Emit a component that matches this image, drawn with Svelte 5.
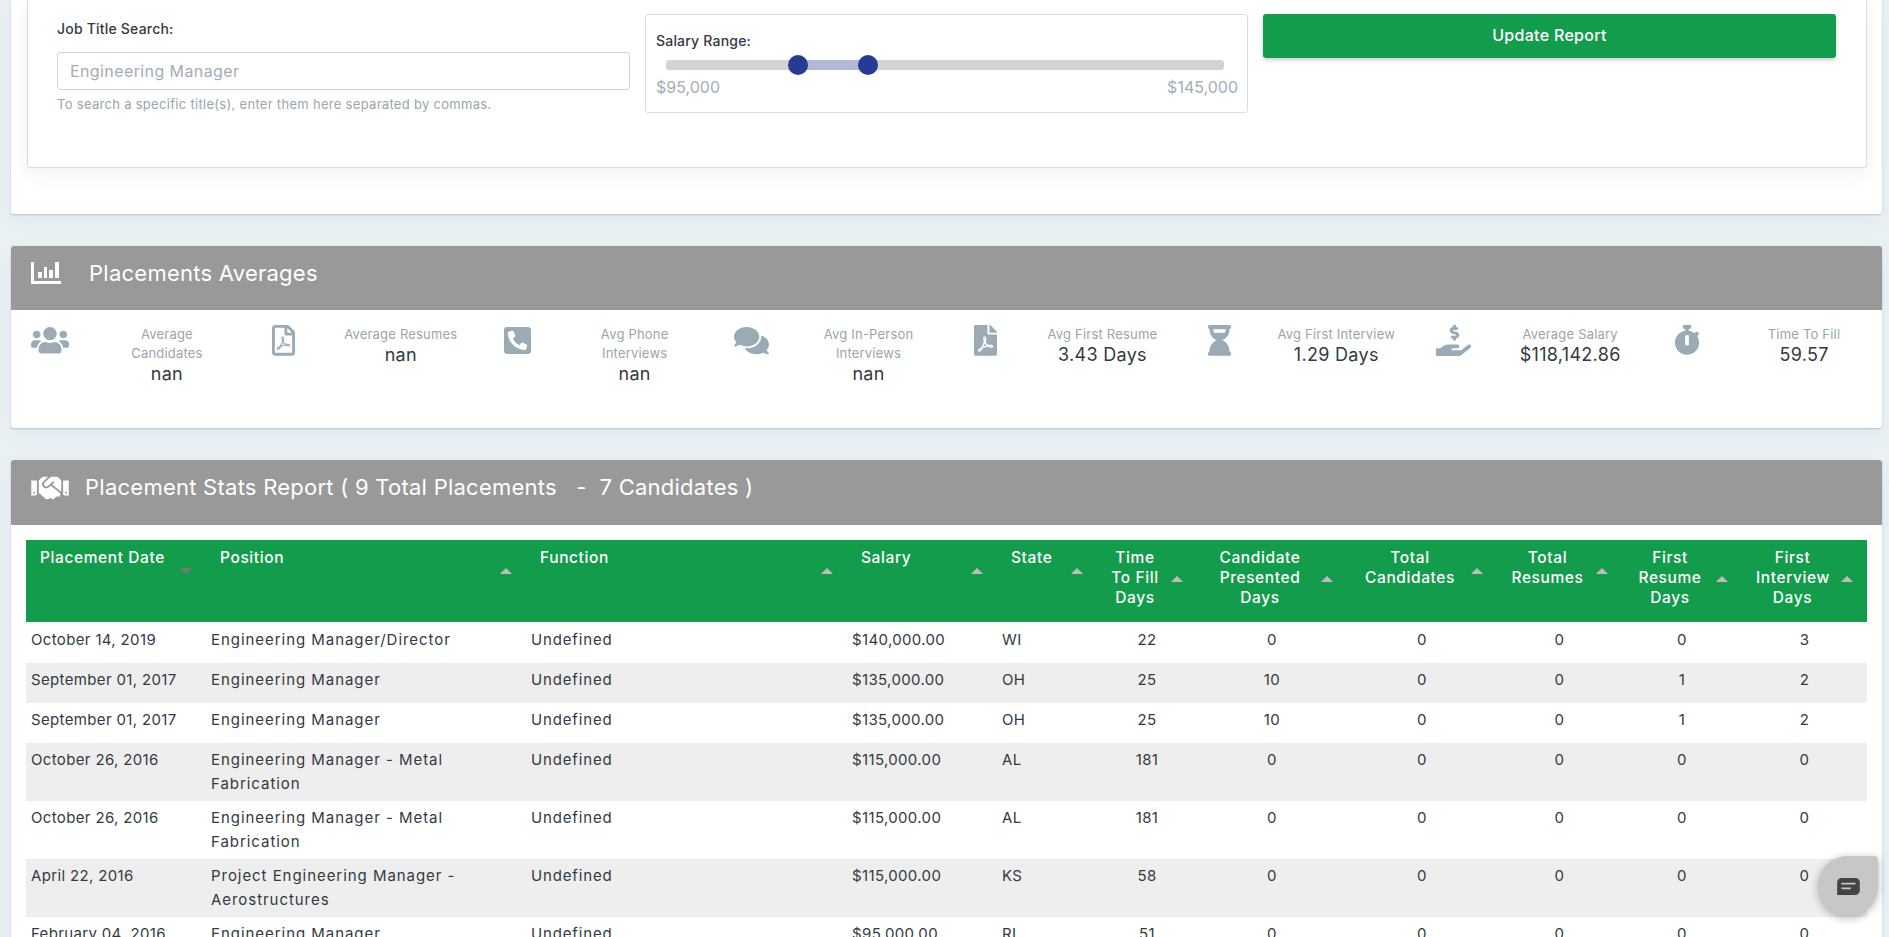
<script>
  const stats = [
    { icon: 'users', label: ['Average', 'Candidates'], value: 'nan' },
    { icon: 'pdfo', label: ['Average Resumes'], value: 'nan' },
    { icon: 'phone', label: ['Avg Phone', 'Interviews'], value: 'nan' },
    { icon: 'comments', label: ['Avg In-Person', 'Interviews'], value: 'nan' },
    { icon: 'pdf', label: ['Avg First Resume'], value: '3.43 Days' },
    { icon: 'hourglass', label: ['Avg First Interview'], value: '1.29 Days' },
    { icon: 'hand', label: ['Average Salary'], value: '$118,142.86' },
    { icon: 'watch', label: ['Time To Fill'], value: '59.57' }
  ];
  const icons = {
    users: { vb: '0 0 640 512', w: 38, d: 'M96 224c35.3 0 64-28.7 64-64s-28.7-64-64-64-64 28.7-64 64 28.7 64 64 64zm448 0c35.3 0 64-28.7 64-64s-28.7-64-64-64-64 28.7-64 64 28.7 64 64 64zm32 32h-64c-17.6 0-33.5 7.1-45.1 18.6 40.3 22.1 68.9 62 75.1 109.4h66c17.7 0 32-14.3 32-32v-32c0-35.3-28.7-64-64-64zm-256 0c61.9 0 112-50.1 112-112S381.9 32 320 32 208 82.1 208 144s50.1 112 112 112zm76.8 32h-8.3c-20.8 10-43.9 16-68.5 16s-47.6-6-68.5-16h-8.3C179.6 288 128 339.6 128 403.2V432c0 26.5 21.5 48 48 48h288c26.5 0 48-21.5 48-48v-28.8c0-63.6-51.6-115.2-115.2-115.2zm-223.7-13.4C161.5 263.1 145.6 256 128 256H64c-35.3 0-64 28.7-64 64v32c0 17.7 14.3 32 32 32h65.9c6.3-47.4 34.9-87.3 75.2-109.4z' },
    pdfo: { vb: '0 0 384 512', w: 23, d: 'M369.9 97.9L286 14C277 5 264.8-.1 252.1-.1H48C21.5 0 0 21.5 0 48v416c0 26.5 21.5 48 48 48h288c26.5 0 48-21.5 48-48V131.9c0-12.7-5.1-25-14.1-34zM332.1 128H256V51.9l76.1 76.1zM48 464V48h160v104c0 13.3 10.7 24 24 24h104v288H48zm250.2-143.7c-12.2-12-47-8.7-64.4-6.5-17.2-10.5-28.7-25-36.8-46.3 3.9-16.1 10.1-40.6 5.4-56-4.2-26.2-37.8-23.6-42.6-5.9-4.4 16.1-.4 38.5 7 67.1-10 23.9-24.9 56-35.4 74.4-20 10.3-47 26.2-51 46.2-3.3 15.8 26 55.2 76.1-31.2 22.4-7.4 46.8-16.5 68.4-20.1 18.9 10.2 41 17 55.8 17 25.5 0 28-28.2 17.5-38.7zm-198.1 77.8c5.1-13.7 24.5-29.5 30.4-35-19 30.3-30.4 35.7-30.4 35zm81.6-190.6c7.4 0 6.7 32.1 1.8 40.8-4.4-13.9-4.3-40.8-1.8-40.8zm-24.4 136.6c9.7-16.9 18-37 24.7-54.7 8.3 15.1 18.9 27.2 30.1 35.5-20.8 4.3-38.9 13.1-54.8 19.2zm131.6-5s-5 6-37.3-7.8c35.1-2.6 40.9 5.4 37.3 7.8z' },
    phone: { vb: '0 0 448 512', w: 27, flip: true, d: 'M400 32H48C21.49 32 0 53.49 0 80v352c0 26.51 21.49 48 48 48h352c26.51 0 48-21.49 48-48V80c0-26.51-21.49-48-48-48zM94 416c-7.033 0-13.057-4.873-14.616-11.627l-14.998-65a15 15 0 0 1 8.707-17.16l69.998-29.999a15 15 0 0 1 17.518 4.289l30.997 37.885c48.944-22.963 88.297-62.858 110.781-110.78l-37.886-30.997a15.001 15.001 0 0 1-4.289-17.518l30-69.998a15.001 15.001 0 0 1 17.16-8.707l65 14.998A14.997 14.997 0 0 1 384 126c0 160.292-129.945 290-290 290z' },
    comments: { vb: '0 0 576 512', w: 35, d: 'M416 192c0-88.4-93.1-160-208-160S0 103.6 0 192c0 34.3 14.1 65.9 38 92-13.4 30.2-35.5 54.2-35.8 54.5-2.2 2.3-2.8 5.7-1.5 8.7S4.8 352 8 352c36.6 0 66.9-12.3 88.7-25 32.2 15.7 70.3 25 111.3 25 114.9 0 208-71.6 208-160zm122 220c23.9-26 38-57.7 38-92 0-66.9-53.5-124.2-129.3-148.1.9 6.6 1.3 13.3 1.3 20.1 0 105.9-107.7 192-240 192-10.8 0-21.3-.8-31.7-1.9C207.8 439.6 281.8 480 368 480c41 0 79.1-9.2 111.3-25 21.8 12.7 52.1 25 88.7 25 3.2 0 6.1-1.9 7.3-4.8 1.3-2.9.7-6.3-1.5-8.7-.3-.3-22.4-24.2-35.8-54.5z' },
    pdf: { vb: '0 0 384 512', w: 23, d: 'M181.9 256.1c-5-16-4.9-46.9-2-46.9 8.4 0 7.6 36.9 2 46.9zm-1.7 47.2c-7.7 20.2-17.3 43.3-28.4 62.7 18.3-7 39-17.2 62.9-21.9-12.7-9.6-24.9-23.4-34.5-40.8zM86.1 428.1c0 .8 13.2-5.4 34.9-40.2-6.7 6.3-29.1 24.5-34.9 40.2zM248 160h136v328c0 13.3-10.7 24-24 24H24c-13.3 0-24-10.7-24-24V24C0 10.7 10.7 0 24 0h200v136c0 13.2 10.8 24 24 24zm-8 171.8c-20-12.2-33.3-29-42.7-53.8 4.5-18.5 11.6-46.6 6.2-64.2-4.7-29.4-42.4-26.5-47.8-6.8-5 18.3-.4 44.1 8.1 77-11.6 27.6-28.7 64.6-40.8 85.8-.1 0-.1.1-.2.1-27.1 13.9-73.6 44.5-54.5 68 5.6 6.9 16 10 21.5 10 17.9 0 35.7-18 61.1-61.8 25.8-8.5 54.1-19.1 79-23.2 21.7 11.8 47.1 19.5 64 19.5 29.2 0 31.2-32 19.7-43.4-13.9-13.6-54.3-9.7-73.6-7.2zM377 105L279 7c-4.5-4.5-10.6-7-17-7h-6v128h128v-6.1c0-6.3-2.5-12.4-7-16.9zm-74.1 255.3c4.1-2.7-2.5-11.9-42.8-9 37.1 15.8 42.8 9 42.8 9z' },
    hourglass: { vb: '0 0 384 512', w: 23, d: 'M24 0h336c13 0 24 11 24 24v16c0 13-11 24-24 24 0 91-51 168-121 192 70 24 121 101 121 192 13 0 24 11 24 24v16c0 13-11 24-24 24H24c-13 0-24-11-24-24v-16c0-13 11-24 24-24 0-91 51-168 121-192C75 232 24 155 24 64 11 64 0 53 0 40V24C0 11 11 0 24 0zm64 72c2 18 6 37 12 56h184c6-19 10-38 12-56H88z' },
    hand: { vb: '0 0 576 512', w: 35, d: 'M271.06,144.3l54.27,14.3a8.59,8.59,0,0,1,6.63,8.1c0,4.6-4.09,8.4-9.12,8.4h-35.6a30,30,0,0,1-11.19-2.2c-5.24-2.2-11.28-1.7-15.3,2l-19,17.5a11.68,11.68,0,0,0-2.25,2.66,11.42,11.42,0,0,0,3.88,15.74,83.77,83.77,0,0,0,34.51,11.5V240c0,8.8,7.83,16,17.37,16h17.37c9.55,0,17.38-7.2,17.38-16V222.4c32.93-3.6,57.84-31,53.5-63-3.15-23-22.46-41.3-46.56-47.7L282.68,97.4a8.59,8.59,0,0,1-6.63-8.1c0-4.6,4.09-8.4,9.12-8.4h35.6A30,30,0,0,1,332,83.1c5.23,2.2,11.28,1.7,15.3-2l19-17.5A11.31,11.31,0,0,0,368.47,61a11.43,11.43,0,0,0-3.84-15.78,83.82,83.82,0,0,0-34.52-11.5V16c0-8.8-7.82-16-17.37-16H295.37C285.82,0,278,7.2,278,16V33.6c-32.89,3.6-57.85,31-53.51,63C227.63,119.6,247,137.9,271.06,144.3ZM565.27,328.1c-11.8-10.7-30.2-10-42.6,0L430.27,402a63.64,63.64,0,0,1-40,14H272a16,16,0,0,1,0-32h78.29c15.9,0,30.71-10.9,33.25-26.6a31.2,31.2,0,0,0,.46-5.46A32,32,0,0,0,352,320H192a117.66,117.66,0,0,0-74.1,26.29L71.4,384H16A16,16,0,0,0,0,400v96a16,16,0,0,0,16,16H372.77a64,64,0,0,0,40-14L564,377a32,32,0,0,0,1.28-48.9Z' },
    watch: { vb: '0 0 448 512', w: 26, d: 'M432 304c0 114.9-93.1 208-208 208S16 418.9 16 304c0-104 76.3-190.2 176-205.5V64h-28c-6.6 0-12-5.4-12-12V12c0-6.6 5.4-12 12-12h120c6.6 0 12 5.4 12 12v40c0 6.6-5.4 12-12 12h-28v34.5c37.5 5.8 71.7 21.6 99.7 44.6l27.5-27.5c4.7-4.7 12.3-4.7 17 0l28.3 28.3c4.7 4.7 4.7 12.3 0 17l-29.4 29.4-.6.6C419.7 223.3 432 262.2 432 304zm-176 36V188.5c0-6.6-5.4-12-12-12h-40c-6.6 0-12 5.4-12 12V340c0 6.6 5.4 12 12 12h40c6.6 0 12-5.4 12-12z' }
  };
  const handshake = 'M434.7 64h-85.9c-8 0-15.7 3-21.6 8.4l-98.3 90c-.1.1-.2.3-.3.4-16.6 15.6-16.3 40.5-2.1 56 12.7 13.9 39.4 17.6 56.1 2.7.1-.1.3-.1.4-.2l79.9-73.2c6.5-5.9 16.7-5.5 22.6 1 6 6.5 5.5 16.6-1 22.6l-26.1 23.9L504 313.8c2.9 2.4 5.5 5 7.9 7.7V128l-54.6-54.6c-5.9-6-14.1-9.4-22.6-9.4zM544 128.2v223.9c0 17.7 14.3 32 32 32h64V128.2h-96zm48 223.9c-8.8 0-16-7.2-16-16s7.2-16 16-16 16 7.2 16 16-7.2 16-16 16zM0 384h64c17.7 0 32-14.3 32-32V128.2H0V384zm48-63.9c8.8 0 16 7.2 16 16s-7.2 16-16 16-16-7.2-16-16c0-8.9 7.2-16 16-16zm435.9 18.6L334.6 217.5l-30 27.5c-29.7 27.1-75.2 24.5-101.7-4.4-26.9-29.4-24.8-74.9 4.4-101.7L289.1 64h-83.8c-8.5 0-16.6 3.4-22.6 9.4L128 128v223.9h18.3l90.5 81.9c27.4 22.3 67.7 18.1 90-9.3l.2-.2 17.9 15.5c15.9 13 39.4 10.5 52.3-5.4l31.4-38.6 5.4 4.4c13.7 11.1 33.9 9.1 45-4.7l9.5-11.7c11.2-13.8 9.1-33.9-4.6-45.1z';

  const cols = [
    { w: 180, head: ['Placement Date'], left: true, dir: 'down' },
    { w: 320, head: ['Position'], left: true },
    { w: 321, head: ['Function'], left: true },
    { w: 150, head: ['Salary'], left: true },
    { w: 100, head: ['State'], left: true },
    { w: 100, head: ['Time', 'To Fill', 'Days'], low: true },
    { w: 150, head: ['Candidate', 'Presented', 'Days'], low: true },
    { w: 150, head: ['Total', 'Candidates'] },
    { w: 125, head: ['Total', 'Resumes'] },
    { w: 120, head: ['First', 'Resume', 'Days'], low: true },
    { w: 125, head: ['First', 'Interview', 'Days'], low: true }
  ];
  const rows = [
    ['October 14, 2019', 'Engineering Manager/Director', 'Undefined', '$140,000.00', 'WI', '22', '0', '0', '0', '0', '3'],
    ['September 01, 2017', 'Engineering Manager', 'Undefined', '$135,000.00', 'OH', '25', '10', '0', '0', '1', '2'],
    ['September 01, 2017', 'Engineering Manager', 'Undefined', '$135,000.00', 'OH', '25', '10', '0', '0', '1', '2'],
    ['October 26, 2016', 'Engineering Manager - Metal Fabrication', 'Undefined', '$115,000.00', 'AL', '181', '0', '0', '0', '0', '0'],
    ['October 26, 2016', 'Engineering Manager - Metal Fabrication', 'Undefined', '$115,000.00', 'AL', '181', '0', '0', '0', '0', '0'],
    ['April 22, 2016', 'Project Engineering Manager - Aerostructures', 'Undefined', '$115,000.00', 'KS', '58', '0', '0', '0', '0', '0'],
    ['February 04, 2016', 'Engineering Manager', 'Undefined', '$95,000.00', 'RI', '51', '0', '0', '0', '0', '0']
  ];
</script>

<div class="page">
  <section class="card filters">
    <div class="inner">
      <div class="search">
        <div class="field-label">Job Title Search:</div>
        <input class="input" placeholder="Engineering Manager" />
        <div class="help">To search a specific title(s), enter them here separated by commas.</div>
      </div>
      <div class="range">
        <div class="range-label">Salary Range:</div>
        <div class="track">
          <div class="fill"></div>
          <span class="knob a"></span>
          <span class="knob b"></span>
        </div>
        <div class="range-values"><span>$95,000</span><span>$145,000</span></div>
      </div>
      <button class="update">Update Report</button>
    </div>
  </section>

  <section class="card averages">
    <header class="head">
      <svg class="chart" viewBox="0 0 30 23" aria-hidden="true">
        <path d="M0 0h3v19h27v3H0z" />
        <path d="M7 10h4v6H7zM13 5h3v11h-3zM18 8h4v8h-4zM24 0h4v16h-4z" />
      </svg>
      <h2 class="title avg-title">Placements Averages</h2>
    </header>
    <div class="stats">
      {#each stats as s}
        <div class="stat">
          <div class="stat-icon">
            <svg viewBox={icons[s.icon].vb} style="width:{icons[s.icon].w}px" class:flip={icons[s.icon].flip} aria-hidden="true">
              <path d={icons[s.icon].d} />
            </svg>
          </div>
          <div class="stat-text">
            {#each s.label as line}<div class="stat-label">{line}</div>{/each}
            <div class="stat-value">{s.value}</div>
          </div>
        </div>
      {/each}
    </div>
  </section>

  <section class="card report">
    <header class="head">
      <svg class="shake" viewBox="0 0 640 512" aria-hidden="true"><path d={handshake} /></svg>
      <h2 class="title">Placement Stats Report ( 9 Total Placements &nbsp; - &nbsp;7 Candidates )</h2>
    </header>
    <div class="table-wrap">
      <table>
        <colgroup>
          {#each cols as c}<col style="width:{c.w}px" />{/each}
        </colgroup>
        <thead>
          <tr>
            {#each cols as c}
              <th class:left={c.left}>
                {#each c.head as line}<div>{line}</div>{/each}
                <span class="sort" class:down={c.dir === 'down'} class:low={c.low}></span>
              </th>
            {/each}
          </tr>
        </thead>
        <tbody>
          {#each rows as row}
            <tr>
              {#each row as cell, i}
                <td class:center={i >= 5} class:pos={i === 1} class:fn={i === 2}>{cell}</td>
              {/each}
            </tr>
          {/each}
        </tbody>
      </table>
    </div>
  </section>

  <div class="chat">
    <svg viewBox="0 0 24 18" aria-hidden="true">
      <path d="M5 0h14c2.8 0 5 2.2 5 5v8c0 2.8-2.2 5-5 5H0V5c0-2.800 2.200-5 5-5z" />
      <path class="line" d="M4.500 5h15v2h-15zM4.500 10h10v2h-10z" />
    </svg>
  </div>
</div>

<style>
  :global(body) {
    margin: 0;
    background: #e9f1f5;
    overflow: hidden;
  }
  .page {
    height: 100vh;
    overflow: hidden;
    padding: 0 7px 0 11px;
    box-sizing: border-box;
    font-family: Inter, "Open Sans", sans-serif;
    font-size: 14px;
    color: #343a40;
  }
  .card {
    background: #fff;
    border-radius: 3px;
    box-shadow: 0 1px 2px rgba(60, 80, 90, 0.25), 0 6px 20px rgba(60, 80, 90, 0.05);
    margin-bottom: 32px;
    overflow: hidden;
  }
  .filters {
    height: 214px;
    padding: 0 15px 0 16px;
    box-sizing: border-box;
    border-radius: 0 0 3px 3px;
  }
  .inner {
    display: flex;
    align-items: flex-start;
    height: 168px;
    box-sizing: border-box;
    padding: 14px 30px 0 29px;
    background: #fff;
    border: 1px solid #d8dde1;
    border-top: 0;
    border-radius: 0 0 3px 3px;
    box-shadow: 0 6px 20px rgba(0, 0, 0, 0.06);
    gap: 15px;
  }
  .search { width: 573px; flex: none; }
  .field-label {
    font-weight: 500;
    font-size: 14px;
    letter-spacing: 0.2px;
    line-height: 20px;
    margin: 5px 0 13px;
  }
  .input {
    display: block;
    width: 100%;
    height: 38px;
    box-sizing: border-box;
    border: 1px solid #ced4da;
    border-radius: 3px;
    padding: 0 12px;
    font: inherit;
    font-size: 16px;
    letter-spacing: 0.4px;
    background: #fff;
  }
  .input::placeholder { color: #a3adb5; opacity: 1; }
  .help {
    font-size: 13px;
    letter-spacing: 0.3px;
    line-height: 18px;
    color: #98a6ad;
    margin-top: 5px;
  }
  .range {
    width: 603px;
    height: 99px;
    flex: none;
    box-sizing: border-box;
    border: 1px solid #d8dde1;
    border-radius: 3px;
    padding: 16px 9px 0 10px;
  }
  .range-label {
    font-weight: 500;
    font-size: 14px;
    letter-spacing: 0.2px;
    line-height: 20px;
    height: 29px;
  }
  .track {
    position: relative;
    height: 10px;
    margin: 0 14px 0 10px;
    background: #d3d3d3;
    border-radius: 3px;
  }
  .fill {
    position: absolute;
    left: 132px;
    width: 70px;
    top: 0;
    bottom: 0;
    background: #b3b8d6;
  }
  .knob {
    position: absolute;
    width: 20px;
    height: 20px;
    top: -5px;
    border-radius: 50%;
    background: #273a94;
  }
  .knob.a { left: 122px; }
  .knob.b { left: 192px; }
  .range-values {
    display: flex;
    justify-content: space-between;
    margin-top: 7px;
    font-size: 16px;
    line-height: 20px;
    color: #a3adb5;
  }
  .update {
    width: 573px;
    height: 44px;
    flex: none;
    border: 0;
    border-radius: 3px;
    background: #139c4b;
    color: #fff;
    font: inherit;
    font-size: 16px;
    letter-spacing: 0.3px;
    font-weight: 500;
    padding: 0 0 3px;
    box-shadow: 0 2px 4px rgba(0, 0, 0, 0.2);
  }
  .head {
    display: flex;
    align-items: flex-start;
    background: #999;
    color: #fff;
    padding: 12px 0 0 20px;
    box-sizing: border-box;
  }
  .averages .head { height: 64px; }
  .report .head { height: 65px; }
  .head svg { fill: #fff; flex: none; }
  .chart { width: 30px; height: 23px; margin-top: 4px; margin-right: 28px; }
  .shake { width: 38px; height: 30px; margin-top: 1px; margin-right: 16px; }
  .title {
    margin: 0;
    font-size: 22px;
    letter-spacing: 0.25px;
    font-weight: 400;
    line-height: 30px;
  }
  .averages { height: 182px; }
  .stats { display: grid; grid-template-columns: repeat(8, 1fr); padding-top: 15px; }
  .stat { display: grid; grid-template-columns: 1fr 2fr; }
  .stat-icon { display: flex; justify-content: center; align-items: flex-start; }
  .stat-icon svg { fill: #9aabb6; display: block; }
  .flip { transform: scaleX(-1); }
  .stat-text { text-align: center; }
  .stat-label {
    font-size: 13px;
    letter-spacing: 0.2px;
    line-height: 19px;
    color: #98a6ad;
  }
  .stat-value {
    font-size: 18px;
    letter-spacing: 0.3px;
    line-height: 24px;
    margin-top: -1px;
  }
  .report { margin-bottom: 0; padding-bottom: 30px; }
  .table-wrap { padding: 15px 15px 0; }
  table {
    width: 1841px;
    table-layout: fixed;
    border-collapse: collapse;
  }
  th {
    position: relative;
    background: #139c4b;
    color: #fff;
    font-weight: 500;
    font-size: 15.5px;
    letter-spacing: 0.6px;
    line-height: 20px;
    height: 82px;
    padding: 8px 38px 14px 14px;
    box-sizing: border-box;
    vertical-align: top;
    text-align: center;
  }
  th.left { text-align: left; }
  .sort {
    position: absolute;
    right: 14px;
    top: 28px;
    width: 0;
    height: 0;
    border-left: 6px solid transparent;
    border-right: 6px solid transparent;
    border-bottom: 6px solid #bdbdbd;
  }
  .sort.low { top: 36px; }
  .sort.down {
    border-bottom: 0;
    border-top: 6px solid #777;
  }
  td {
    padding: 5px;
    height: 40px;
    box-sizing: border-box;
    font-size: 15px;
    letter-spacing: 0.35px;
    line-height: 24px;
    vertical-align: top;
  }
  td.pos { padding-right: 45px; letter-spacing: 0.95px; }
  td.fn { letter-spacing: 0.85px; }
  td.center { text-align: center; }
  tbody tr:first-child td { padding-top: 6px; height: 41px; }
  tbody tr:nth-child(even) td { background: #eee; }
  .chat {
    position: fixed;
    right: 11px;
    bottom: 21px;
    width: 60px;
    height: 60px;
    display: flex;
    align-items: center;
    justify-content: center;
    background: #c7c7c7;
    border-radius: 50% 4px 50% 50%;
    box-shadow: 0 2px 8px rgba(0, 0, 0, 0.3);
  }
  .chat svg { width: 23px; height: 17px; fill: #444; }
  .chat .line { fill: #c7c7c7; }
</style>
